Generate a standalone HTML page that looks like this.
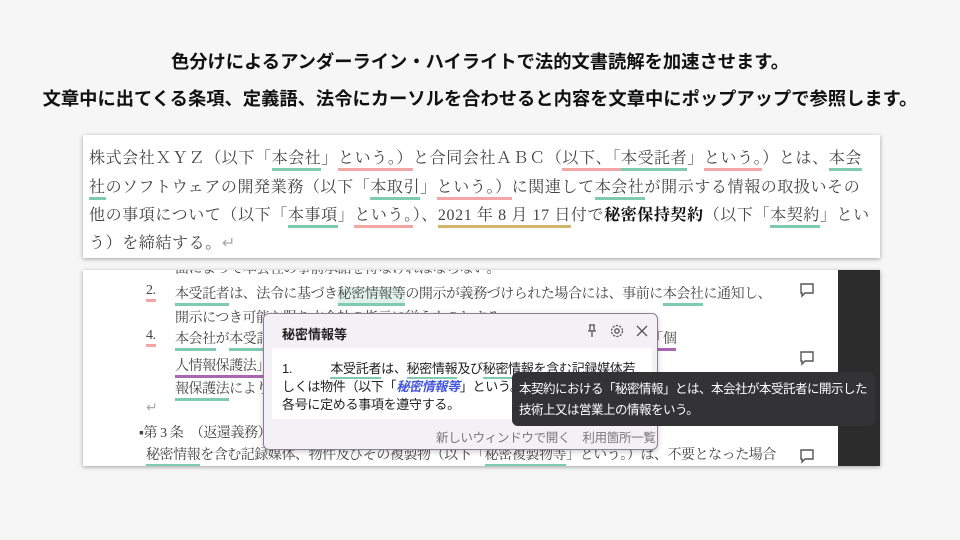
<!DOCTYPE html>
<html><head><meta charset="utf-8"><style>
*{margin:0;padding:0;box-sizing:border-box}
body{width:960px;height:540px;background:#f6f6f6;position:relative;overflow:hidden;font-family:"Liberation Sans","Noto Sans CJK JP",sans-serif}
.t{position:absolute;left:0;width:960px;text-align:center;font-weight:bold;font-size:18.3px;color:#111;white-space:nowrap}
.box1{position:absolute;left:83px;top:135px;width:797px;height:123px;background:#fff;box-shadow:0 1px 4px rgba(0,0,0,.35)}
.s{font-family:"Liberation Serif","Noto Serif CJK JP",serif;color:#444;position:absolute;white-space:nowrap}
.b1 .s{font-size:16px;left:6px;letter-spacing:0.6px}
.g{border-bottom:3px solid #7fcbb0;padding-bottom:1px}
.r{border-bottom:3px solid #f2a6a6;padding-bottom:1px}
.y{border-bottom:3px solid #d3b46c;padding-bottom:1px}
.p{border-bottom:3px solid #a967b0;padding-bottom:1px}
.box2{position:absolute;left:83px;top:270px;width:797px;height:196px;background:#fff;box-shadow:0 1px 4px rgba(0,0,0,.35);overflow:hidden}
.b2 .s{font-size:14px;letter-spacing:-0.45px}
.dark{position:absolute;left:755px;top:0;width:42px;height:196px;background:#2c2c2c}
.cm{position:absolute;left:716px}
.pop{position:absolute;left:263px;top:313px;width:395px;height:137px;background:#f4f1f6;border:1.5px solid #8c7d93;border-radius:6px;box-shadow:0 2px 6px rgba(0,0,0,.2)}
.inner{position:absolute;left:8px;top:34px;width:380px;height:71px;background:#fff;border-radius:3px}
.tip{position:absolute;left:512px;top:372px;width:363px;height:54px;background:#333336;border-radius:6px;color:#fff;font-size:12.5px;letter-spacing:-0.5px;padding:7px 0 0 7px;line-height:21px;white-space:nowrap}
</style></head><body>
<div class="t" style="top:48px">色分けによるアンダーライン・ハイライトで法的文書読解を加速させます。</div>
<div class="t" style="top:85px">文章中に出てくる条項、定義語、法令にカーソルを合わせると内容を文章中にポップアップで参照します。</div>

<div class="box1 b1">
<div class="s" style="top:10px">株式会社ＸＹＺ（以下「<span class="g">本会社</span>」<span class="r">という。）</span>と合同会社ＡＢＣ（<span class="r">以下、「</span><span class="g">本受託者</span>」<span class="r">という。</span>）とは、<span class="g">本会</span></div>
<div class="s" style="top:39px"><span class="g">社</span>のソフトウェアの開発業務（以下「<span class="g">本取引</span>」<span class="r">という。）</span>に関連して<span class="g">本会社</span>が開示する情報の取扱いその</div>
<div class="s" style="top:67px">他の事項について（以下「<span class="g">本事項</span>」<span class="r">という。</span>）、<span class="y">2021 年 8 月 17 日</span>付で<b style="color:#111">秘密保持契約</b>（以下「<span class="g">本契約</span>」とい</div>
<div class="s" style="top:95px">う）を締結する。<span style="color:#aaa">↵</span></div>
</div>

<div class="box2 b2">
<div class="s" style="left:92px;top:-12px">面によって本会社の事前承諾を得なければならない。</div>
<div class="s" style="left:63px;top:13px"><span class="r">2.</span></div>
<div class="s" style="left:92px;top:13px"><span class="g">本受託者</span>は、法令に基づき<span class="g" style="background:#dff1ea">秘密情報等</span>の開示が義務づけられた場合には、事前に<span class="g">本会社</span>に通知し、</div>
<div class="s" style="left:92px;top:37px">開示につき可能な限り本会社の指示に従うものとする。</div>
<div class="s" style="left:63px;top:58px"><span class="r">4.</span></div>
<div class="s" style="left:92px;top:58px"><span class="g">本会社</span>が<span class="g">本受託者</span>に開示する情報のうち、個人情報の保護に関<span class="p">する法律（以下「個</span></div>
<div class="s" style="left:92px;top:85px"><span class="p">人情報保護法」</span>という。）に定める個人情報について、<span class="g">本会社</span>は<span class="g">個人情</span></div>
<div class="s" style="left:92px;top:108px"><span class="g">報保護法</span>により、</div>
<div class="s" style="left:63px;top:130px;color:#aaa">↵</div>
<div class="s" style="left:56px;top:152px">▪第 3 条　（返還義務）</div>
<div class="s" style="left:63px;top:174px"><span class="g">秘密情報</span>を含む記録媒体、物件及びその複製物（以下「<span class="g">秘密複製物等</span>」という。）は、不要となった場合</div>
<svg class="cm" style="top:12px" width="16" height="16" viewBox="0 0 16 16" fill="none" stroke="#555" stroke-width="1.4"><path d="M2 2h12v9H6l-3 3V11H2z"/></svg>
<svg class="cm" style="top:80px" width="16" height="16" viewBox="0 0 16 16" fill="none" stroke="#555" stroke-width="1.4"><path d="M2 2h12v9H6l-3 3V11H2z"/></svg>
<svg class="cm" style="top:178px" width="16" height="16" viewBox="0 0 16 16" fill="none" stroke="#555" stroke-width="1.4"><path d="M2 2h12v9H6l-3 3V11H2z"/></svg>
<div class="dark"></div>
</div>

<div class="pop">
<div style="position:absolute;left:18px;top:10px;font-size:13px;font-weight:bold;color:#222">秘密情報等</div>
<svg style="position:absolute;left:320px;top:9px" width="66" height="16" viewBox="0 0 66 16" fill="none" stroke="#555" stroke-width="1.3">
<path d="M5 2h6M6 2v6M10 2v6M4 8h8M8 8v6"/>
<circle cx="33" cy="8" r="2.2"/><circle cx="33" cy="8" r="5.5" stroke-dasharray="2.2 1.3"/>
<path d="M53 3l10 10M63 3L53 13"/>
</svg>
<div class="inner">
<div style="position:absolute;left:10px;top:12px;font-size:13px;letter-spacing:-0.3px;color:#222;line-height:18px;white-space:nowrap">1.　　　<span class="g" style="border-width:2px">本受託者</span>は、<span class="g" style="border-width:2px">秘密情報</span>及び<span class="g" style="border-width:2px">秘密情報</span>を含む記録媒体若<br>しくは物件（以下「<i style="color:#4455dd;font-weight:bold">秘密情報等</i>」という。）<br>各号に定める事項を遵守する。</div>
</div>
<div style="position:absolute;left:172px;top:113px;font-size:12.5px;letter-spacing:-0.3px;color:#777">新しいウィンドウで開く　利用箇所一覧</div>
</div>
<div class="tip">本契約における「秘密情報」とは、本会社が本受託者に開示した<br>技術上又は営業上の情報をいう。</div>
</body></html>
